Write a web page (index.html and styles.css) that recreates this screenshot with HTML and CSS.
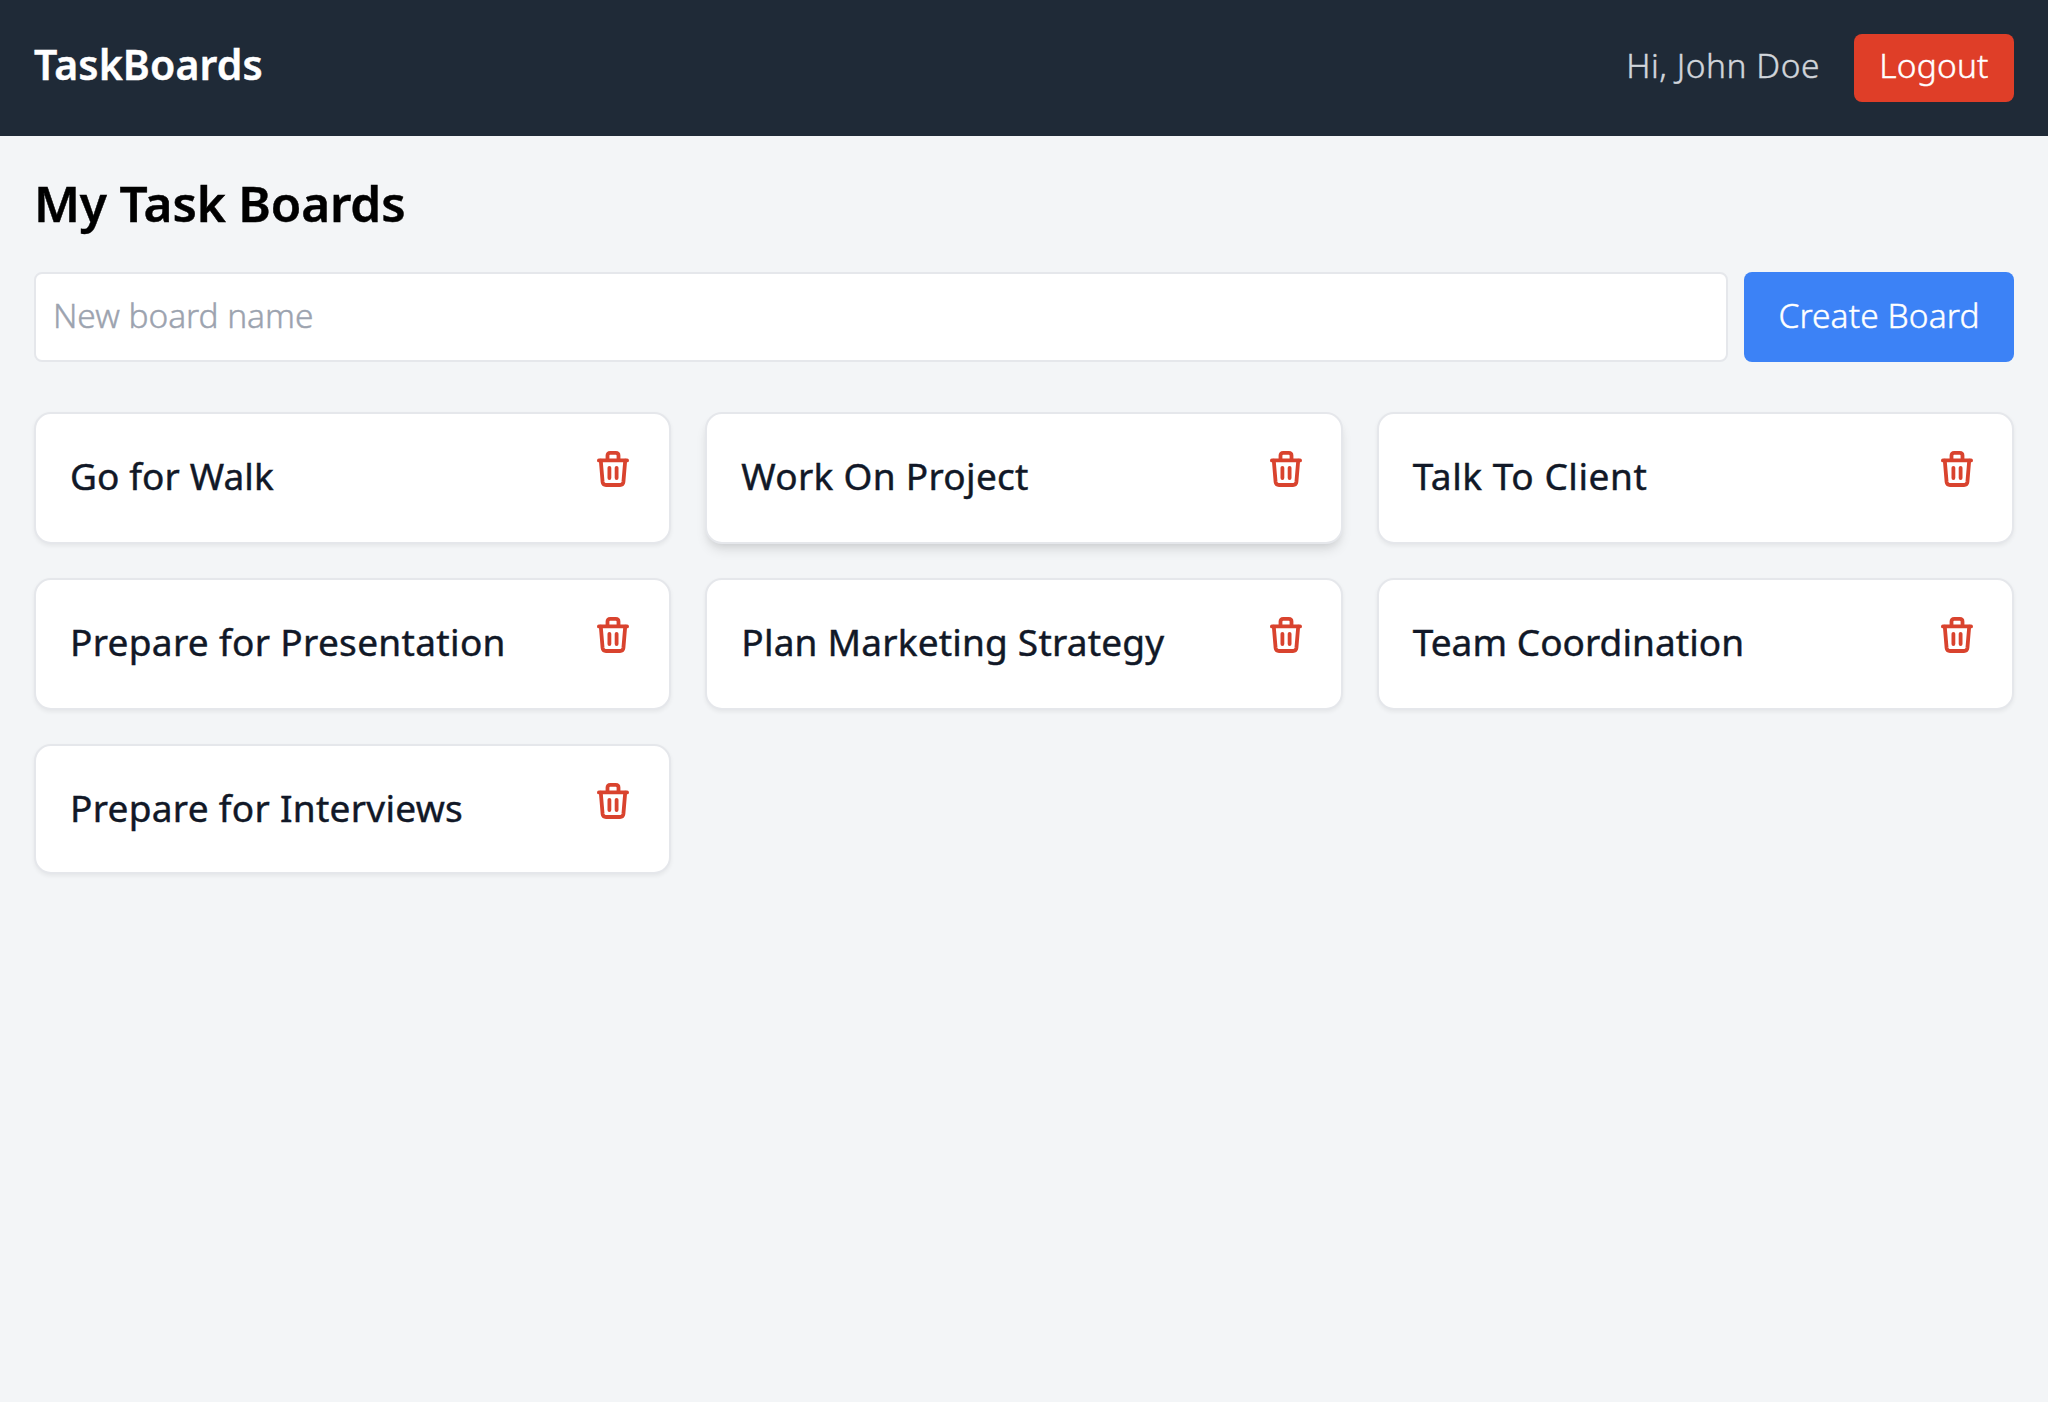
FILE: index.html
```html
<!DOCTYPE html>
<html lang="en">
<head>
<meta charset="utf-8">
<title>TaskBoards</title>
<link rel="stylesheet" href="styles.css">
</head>
<body>
<svg class="sprite" aria-hidden="true">
  <symbol id="trash" viewBox="0 0 32 36">
    <g fill="none" stroke="currentColor" stroke-width="3.8" stroke-linecap="round" stroke-linejoin="round">
      <path d="M1.9 9.4H30.1"/>
      <path d="M10.5 9V4.6Q10.5 1.9 13.2 1.9H18.8Q21.5 1.9 21.5 4.6V9"/>
      <path d="M3.8 9.6L5.6 31Q6 34 9 34H23Q26 34 26.4 31L28.2 9.6"/>
      <path d="M12.4 16.8V27M19.6 16.8V27"/>
    </g>
  </symbol>
</svg>
<header class="navbar">
  <div class="brand">TaskBoards</div>
  <div class="account">
    <span class="greeting">Hi, John Doe</span>
    <button class="logout">Logout</button>
  </div>
</header>
<main class="page">
  <h1 class="heading">My Task Boards</h1>
  <form class="create-form">
    <input class="board-name" type="text" placeholder="New board name">
    <button class="create" type="button">Create Board</button>
  </form>
  <div class="boards">
    <article class="board"><h2 class="board-title">Go for Walk</h2><svg class="trash"><use href="#trash"/></svg></article>
    <article class="board board-raised"><h2 class="board-title">Work On Project</h2><svg class="trash"><use href="#trash"/></svg></article>
    <article class="board"><h2 class="board-title">Talk To Client</h2><svg class="trash"><use href="#trash"/></svg></article>
    <article class="board"><h2 class="board-title">Prepare for Presentation</h2><svg class="trash"><use href="#trash"/></svg></article>
    <article class="board"><h2 class="board-title">Plan Marketing Strategy</h2><svg class="trash"><use href="#trash"/></svg></article>
    <article class="board"><h2 class="board-title">Team Coordination</h2><svg class="trash"><use href="#trash"/></svg></article>
    <article class="board"><h2 class="board-title">Prepare for Interviews</h2><svg class="trash"><use href="#trash"/></svg></article>
  </div>
</main>
</body>
</html>
```
FILE: styles.css
```css
* { box-sizing: border-box; }
body {
  margin: 0;
  min-height: 100vh;
  background: #f3f5f7;
  font-family: "Noto Sans", sans-serif;
  font-size: 33.5px;
  font-weight: 300;
  -webkit-text-stroke: 0.45px currentColor;
}
button, input { font: inherit; border: 0; margin: 0; -webkit-text-stroke: inherit; }
.sprite { display: none; }

.navbar {
  display: flex;
  justify-content: space-between;
  align-items: flex-start;
  height: 136px;
  padding: 34px;
  background: #1f2a37;
  color: #fff;
}
.brand { font-size: 41px; font-weight: 600; line-height: 60px; letter-spacing: 0.13px; }
.account { display: flex; gap: 34px; }
.greeting { color: #d1d5db; line-height: 63px; letter-spacing: 0.55px; }
.logout {
  width: 160px;
  height: 68px;
  padding: 0 0 7px;
  border-radius: 8px;
  background: #df3e28;
  color: #fff;
  letter-spacing: 0.2px;
}

.page { padding: 34px; }
.heading { margin: 0 0 36px; font-size: 49.5px; font-weight: 600; line-height: 66px; letter-spacing: -0.15px; }
.create-form { display: flex; gap: 16px; height: 90px; margin-bottom: 50px; }
.board-name {
  flex: 1;
  padding: 0 17px 4px;
  border: 2px solid #e5e7eb;
  border-radius: 8px;
  background: #fff;
  letter-spacing: -0.05px;
}
.board-name::placeholder { color: #9ca3af; opacity: 1; -webkit-text-stroke-color: #9ca3af; }
.create {
  width: 270px;
  padding: 0 0 4px;
  border-radius: 8px;
  background: #3c82f6;
  color: #fff;
  letter-spacing: 0.1px;
}

.boards {
  display: grid;
  grid-template-columns: repeat(3, 1fr);
  grid-template-rows: 132px 132px 130px;
  gap: 34px;
}
.board {
  display: flex;
  justify-content: space-between;
  align-items: flex-start;
  padding: 34px 39px 0 34px;
  border: 2px solid #e5e7eb;
  border-radius: 17px;
  background: #fff;
  box-shadow: 0 2px 4px rgba(0, 0, 0, 0.06);
}
.board:nth-child(3n + 1) { padding-right: 40px; }
.board-raised { box-shadow: 0 8px 12px -2px rgba(0, 0, 0, 0.1), 0 4px 8px -4px rgba(0, 0, 0, 0.1); }
.board-title { margin: 0; color: #111827; font-size: 37px; font-weight: 400; line-height: 55px; letter-spacing: 0.3px; }
.board:nth-child(1) .board-title { letter-spacing: 0.1px; }
.board:nth-child(3) .board-title { letter-spacing: 0.56px; }
.board:nth-child(4) .board-title { letter-spacing: 0.33px; }
.board:nth-child(5) .board-title { letter-spacing: 0.2px; }
.board:nth-child(6) .board-title { letter-spacing: 0.05px; }
.trash { width: 32px; height: 36px; margin-top: 3px; color: #d9432e; }
```
